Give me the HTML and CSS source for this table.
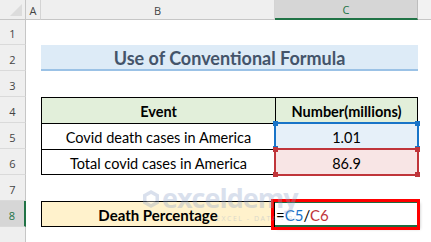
FILE: index.html
```html
<!DOCTYPE html>
<html>
<head>
<meta charset="utf-8">
<link rel="stylesheet" href="styles.css">
</head>
<body>
<div class="sheet">
  <div class="corner"><span class="tri"></span></div>
  <div class="colh">A</div>
  <div class="colh">B</div>
  <div class="colh sel">C</div>
  <div class="colh last"></div>

  <div class="rowh">1</div><div class="cell span4"></div>
  <div class="rowh">2</div><div class="cell"></div><div class="title">Use of Conventional Formula</div><div class="cell"></div>
  <div class="rowh">3</div><div class="cell span4"></div>
  <div class="rowh">4</div><div class="cell"></div>
  <div class="tc th">Event</div><div class="tc th rc">Number(millions)</div><div class="cell"></div>
  <div class="rowh">5</div><div class="cell"></div>
  <div class="tc">Covid death cases in America</div>
  <div class="tc rc ref blue">1.01<span class="box"><i class="tl"></i><i class="tr"></i><i class="bl"></i><i class="br"></i></span></div><div class="cell"></div>
  <div class="rowh">6</div><div class="cell"></div>
  <div class="tc bb">Total covid cases in America</div>
  <div class="tc rc bb ref red">86.9<span class="box"><i class="tl"></i><i class="tr"></i><i class="bl"></i><i class="br"></i></span></div><div class="cell"></div>
  <div class="rowh">7</div><div class="cell span4"></div>
  <div class="rowh selr">8</div><div class="cell"></div>
  <div class="label">Death Percentage</div>
  <div class="active"><span class="formula">=<b class="fb">C5</b>/<b class="fr">C6</b></span><span class="hl"></span></div><div class="cell"></div>
  <div class="rowh"></div><div class="cell span4"></div>

  <div class="mark">
    <svg class="logo" width="18" height="20" viewBox="0 0 18 20"><path d="M9 1 L17 5.5 L17 14.5 L9 19 L1 14.5 L1 5.5 Z" fill="#8fa3c9"/><path d="M9 5 L13.5 7.5 L13.5 12.5 L9 15 L4.5 12.5 L4.5 7.5 Z" fill="#ffffff"/></svg>
    <div class="mtext"><span class="mbig">exceldemy</span><span class="msmall">EXCEL - DATA - BI</span></div>
  </div>
</div>
</body>
</html>
```
FILE: styles.css
```css
html, body { margin: 0; padding: 0; background: #fff; }
.sheet {
  position: relative;
  width: 431px;
  height: 242px;
  overflow: hidden;
  display: grid;
  grid-template-columns: 26px 15px 234px 143px 13px;
  grid-template-rows: 20px 25px repeat(8, 26px);
  font-family: Lato, "Open Sans", sans-serif;
  color: #000;
}
.corner {
  background: #efefef;
  border-right: 1px solid #c6c6c6;
  border-bottom: 1px solid #c6c6c6;
  position: relative;
}
.tri {
  position: absolute;
  right: 3px; bottom: 3px;
  width: 0; height: 0;
  border-left: 12px solid transparent;
  border-bottom: 12px solid #dcdcdc;
}
.colh {
  background: #efefef;
  border-right: 1px solid #d4d4d4;
  border-bottom: 1px solid #c6c6c6;
  display: flex;
  align-items: center;
  justify-content: center;
  font-family: "Open Sans", sans-serif;
  font-size: 11px;
  color: #444;
  line-height: 1;
  padding-top: 1px;
  box-sizing: border-box;
}
.colh.sel {
  background: #d6d6d6;
  border-bottom: 2px solid #217346;
  color: #217346;
  border-right-color: #bdbdbd;
}
.colh.last { border-right: none; background: #f2f2f2; }
.rowh {
  background: #efefef;
  border-right: 1px solid #c6c6c6;
  border-bottom: 1px solid #dadada;
  display: flex;
  align-items: center;
  justify-content: center;
  font-family: "Open Sans", sans-serif;
  font-size: 11px;
  color: #444;
  box-sizing: border-box;
  padding-top: 3px;
}
.rowh.selr {
  background: #d6d6d6;
  border-right: 2px solid #217346;
  color: #217346;
}
.span4 { grid-column: span 4; }
.title {
  grid-column: span 2;
  background: #ddebf7;
  border-bottom: 2px solid #9bc2e6;
  color: #44546a;
  font-weight: 700;
  font-size: 18px;
  display: flex;
  align-items: center;
  justify-content: center;
  padding-top: 2px;
  box-sizing: border-box;
}
.tc {
  border-left: 1px solid #000;
  border-top: 1px solid #000;
  display: flex;
  align-items: center;
  justify-content: center;
  font-size: 14.5px;
  padding-top: 2px;
  box-sizing: border-box;
  position: relative;
}
.tc.rc { border-right: 1px solid #000; }
.tc.bb { border-bottom: 1px solid #000; }
.th { background: #e2efda; font-weight: 700; }
.blue { background: #e6f0f9; }
.red { background: #f8e5e5; }
.box {
  position: absolute;
  left: -2px; top: -2px; right: -2px; bottom: -2px;
  border: 2px solid;
  pointer-events: none;
}
.blue .box { border-color: #1874c8; bottom: -1px; }
.red .box { border-color: #c0353a; z-index: 2; }
.box i {
  position: absolute;
  width: 5px; height: 5px;
}
.blue .box i { background: #1874c8; }
.red .box i { background: #c0353a; }
.box .tl { left: -3px; top: -3px; }
.box .tr { right: -3px; top: -3px; }
.box .bl { left: -3px; bottom: -3px; }
.box .br { right: -3px; bottom: -3px; }
.label {
  background: #fff2cc;
  border: 1px solid #000;
  display: flex;
  align-items: center;
  justify-content: center;
  font-weight: 700;
  font-size: 15px;
  padding-top: 2px;
  box-sizing: border-box;
  position: relative;
  z-index: 1;
}
.active {
  position: relative;
  border-top: 2px solid #1e6b41;
  border-bottom: 2px solid #1e6b41;
  box-shadow: 2px 2px 3px rgba(0,0,0,0.25);
  display: flex;
  align-items: center;
  padding-left: 1px;
  padding-top: 1px;
  box-sizing: border-box;
  font-size: 15px;
  z-index: 1;
}
.formula b { font-weight: 400; }
.fb { color: #1a73c9; }
.fr { color: #c0353a; }
.hl {
  position: absolute;
  left: -4px; top: -4px; right: -2px; bottom: -5px;
  border: 3px solid #ff0000;
}
.mark {
  position: absolute;
  left: 142px;
  top: 184px;
  display: flex;
  align-items: flex-start;
  gap: 2px;
  opacity: 0.33;
  pointer-events: none;
  z-index: 3;
}
.logo { margin-top: 5px; }
.mtext { display: flex; flex-direction: column; align-items: flex-end; }
.mbig {
  font-family: "Open Sans", sans-serif;
  font-weight: 700;
  font-size: 27px;
  line-height: 27px;
  color: #8fa3c9;
  letter-spacing: -1px;
}
.msmall {
  font-family: "Open Sans", sans-serif;
  font-size: 7px;
  line-height: 8px;
  letter-spacing: 1.5px;
  color: #8fa3c9;
  margin-top: 4px;
}
```
